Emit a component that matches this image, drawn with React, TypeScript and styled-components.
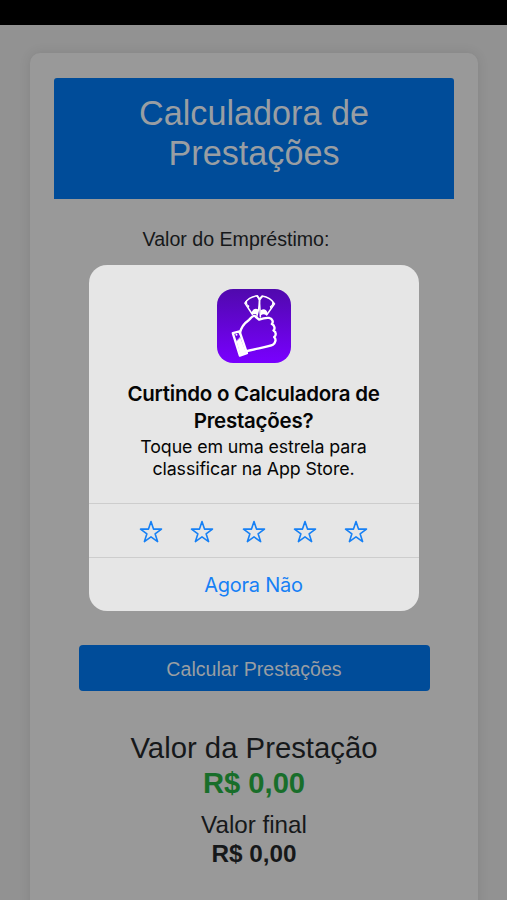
import React from "react";
import styled, { createGlobalStyle } from "styled-components";

const GlobalStyle = createGlobalStyle`
  * { box-sizing: border-box; }
  body { margin: 0; background: #929292; }
`;

const Screen = styled.div`
  position: relative;
  width: 507px;
  height: 900px;
  overflow: hidden;
  display: flex;
  flex-direction: column;
  background: #929292;
  color: #16181a;
  font-family: "Liberation Sans", Arial, sans-serif;
`;

const StatusBar = styled.div`
  flex: none;
  height: 25px;
  background: #000;
`;

const Card = styled.main`
  flex: none;
  display: flex;
  flex-direction: column;
  align-items: center;
  width: 448px;
  height: 900px;
  margin: 28px 0 0 30px;
  padding: 25px 24px;
  border-radius: 10px;
  background: #999;
  box-shadow: 0 0 12px rgba(0, 0, 0, 0.1);
`;

const Header = styled.header`
  flex: none;
  width: 400px;
  height: 121px;
  padding-top: 15px;
  border-radius: 3px 3px 0 0;
  background: #004c99;
`;

const Title = styled.h1`
  margin: 0;
  color: #999ea3;
  font-size: 34.2px;
  font-weight: 400;
  line-height: 40px;
  text-align: center;
`;

const Label = styled.label`
  margin: 28px 36px 0 0;
  font-size: 19.6px;
  line-height: 24px;
`;

const Submit = styled.button`
  flex: none;
  width: 351px;
  height: 46px;
  margin-top: 394px;
  padding: 1px 0 0;
  border: 0;
  border-radius: 4px;
  background: #004c99;
  color: #999ea3;
  font: 19.6px/24px "Liberation Sans", Arial, sans-serif;
`;

const Results = styled.section`
  display: flex;
  flex-direction: column;
  align-items: center;
  margin-top: 40px;
`;

const ResultLine = styled.div<{ $size: number; $line: number; $bold?: boolean; $color?: string }>`
  font-size: ${(p) => p.$size}px;
  line-height: ${(p) => p.$line}px;
  font-weight: ${(p) => (p.$bold ? 700 : 400)};
  color: ${(p) => p.$color ?? "inherit"};
  white-space: nowrap;
`;

const ResultGap = styled.div`
  height: 9px;
`;

const Overlay = styled.div`
  position: absolute;
  inset: 0;
  display: flex;
  justify-content: center;
  align-items: flex-start;
  padding-top: 265px;
`;

const Dialog = styled.div`
  display: flex;
  flex-direction: column;
  width: 330px;
  height: 346px;
  border-radius: 18px;
  background: #e6e6e6;
  color: #050505;
  font-family: Inter, sans-serif;
  overflow: hidden;
`;

const Message = styled.div`
  height: 238px;
  padding-top: 24px;
  display: flex;
  flex-direction: column;
  align-items: center;
  text-align: center;
`;

const AppIcon = styled.svg`
  flex: none;
  width: 74px;
  height: 74px;
`;

const Heading = styled.h2`
  margin: 17px 0 2px;
  font-size: 20.5px;
  font-weight: 600;
  line-height: 27px;
  letter-spacing: -0.25px;
  white-space: nowrap;
`;

const Hint = styled.p`
  margin: 0;
  font-size: 17.8px;
  line-height: 22px;
  letter-spacing: -0.1px;
  white-space: nowrap;
`;

const Stars = styled.div`
  display: flex;
  justify-content: center;
  align-items: center;
  gap: 27.4px;
  height: 54px;
  padding-top: 2px;
  border-top: 1px solid #cdcdcd;
`;

const StarButton = styled.button`
  display: flex;
  padding: 0;
  border: 0;
  background: none;
`;

const Dismiss = styled.button`
  height: 54px;
  padding: 1px 0 0;
  border: 0;
  border-top: 1px solid #cdcdcd;
  background: none;
  color: #1680f5;
  font: 400 20px/24px Inter, sans-serif;
  letter-spacing: -0.25px;
`;

const Star = () => (
  <svg width="24" height="24" viewBox="0 0 24 24" fill="none" stroke="#1680f5" strokeWidth="1.6" strokeLinejoin="round">
    <path d="M12 1.6 14.5 9.1H22.5L16.1 13.8 18.6 21.6 12 16.9 5.4 21.6 7.9 13.8 1.5 9.1H9.5Z" />
  </svg>
);

const Logo = () => (
  <AppIcon viewBox="22 21 220 220" aria-label="Calculadora de Prestações">
    <defs>
      <linearGradient id="purple" x1="0" y1="0" x2="0" y2="1">
        <stop offset="0" stopColor="#5009ad" />
        <stop offset="1" stopColor="#7900ff" />
      </linearGradient>
    </defs>
    <rect x="22" y="21" width="220" height="220" rx="48" fill="url(#purple)" />
    <g fill="none" stroke="#fff" strokeWidth="7" strokeLinejoin="round" strokeLinecap="round">
      <path d="M127 96 105 63Q117 44 142 41L149 51 146 80 140 104" strokeWidth="4.5" />
      <path d="M151 104 148 51 156 42Q181 46 193 65L170 98" strokeWidth="4.5" />
      <path d="M90 153C93 134 104 122 117 113C124 107 126 99 134 101L147 112C158 108 168 106 177 107C188 109 190 120 185 125C194 129 195 140 190 144C199 149 198 160 192 164C199 170 196 182 188 187C179 192 136 199 110 206" />
      <path d="M69 152 89 147 111 212 90 219Z" />
      <path d="M91 165 109 212 92 218 80 176Z" fill="#fff" strokeWidth="1" />
    </g>
    <g fill="#fff">
      <path d="M125 90Q132 75 145 82L142 98Q133 92 127 98Z" />
      <path d="M152 84Q167 76 173 94L169 100Q160 92 153 99Z" />
      <path d="M105 60 111 54 112 66 118 71 117 78ZM193 63 187 57 185 68 179 73 180 80ZM138 41 143 41 149 51 156 41 160 43 151 54 146 54Z" />
    </g>
    <circle cx="80" cy="157" r="3" fill="#fff" />
  </AppIcon>
);

export default function App() {
  return (
    <>
      <GlobalStyle />
      <Screen>
        <StatusBar />
        <Card>
          <Header>
            <Title>Calculadora de<br />Prestações</Title>
          </Header>
          <Label>Valor do Empréstimo:</Label>
          <Submit>Calcular Prestações</Submit>
          <Results>
            <ResultLine $size={29.3} $line={34}>Valor da Prestação</ResultLine>
            <ResultLine $size={29.2} $line={36} $bold $color="#186e2a">R$ 0,00</ResultLine>
            <ResultGap />
            <ResultLine $size={24.2} $line={29}>Valor final</ResultLine>
            <ResultLine $size={24.3} $line={29} $bold>R$ 0,00</ResultLine>
          </Results>
        </Card>
        <Overlay>
          <Dialog role="dialog">
            <Message>
              <Logo />
              <Heading>Curtindo o Calculadora de<br />Prestações?</Heading>
              <Hint>Toque em uma estrela para<br />classificar na App Store.</Hint>
            </Message>
            <Stars>
              {[1, 2, 3, 4, 5].map((n) => (
                <StarButton key={n} aria-label={`${n}`}><Star /></StarButton>
              ))}
            </Stars>
            <Dismiss>Agora Não</Dismiss>
          </Dialog>
        </Overlay>
      </Screen>
    </>
  );
}
